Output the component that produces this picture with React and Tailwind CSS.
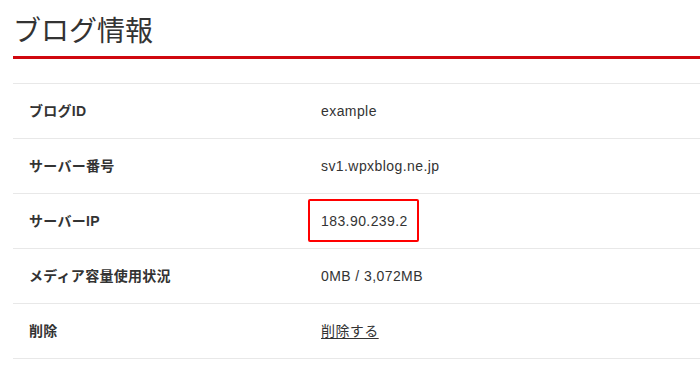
const FONT = {
  fontFamily:
    '"Liberation Sans", "Noto Sans CJK JP", "Noto Sans", sans-serif',
};

const ROWS = [
  { label: "ブログID", value: "example" },
  { label: "サーバー番号", value: "sv1.wpxblog.ne.jp" },
  { label: "サーバーIP", value: "183.90.239.2", highlight: true },
  { label: "メディア容量使用状況", value: "0MB / 3,072MB" },
  { label: "削除", value: "削除する", link: true },
];

function InfoRow({ label, value, highlight, link }) {
  return (
    <div className="grid grid-cols-[292px_1fr] h-[55px] border-b border-[#e8e8e8] items-center">
      <div className="pl-4 text-[14px] font-bold text-[#333] tracking-[0.02em]">
        {label}
      </div>
      <div className="pl-4 text-[14px] text-[#333] tracking-[0.03em]">
        <span className="relative inline-block">
          {link ? (
            <a href="#" className="underline underline-offset-2 text-[#333]">
              {value}
            </a>
          ) : (
            value
          )}
          {highlight && (
            <span className="absolute -left-[13px] w-[111px] -top-[12px] h-[43px] border-2 border-[#f00] rounded-[2px] pointer-events-none" />
          )}
        </span>
      </div>
    </div>
  );
}

export default function App() {
  return (
    <div className="w-[700px] h-[392px] bg-white pl-[13px] overflow-hidden" style={FONT}>
      <h1 className="pt-[18px] pb-[10px] text-[28px] leading-[28px] font-normal text-[#333] border-b-[3px] border-[#d0070f]">
        ブログ情報
      </h1>
      <div className="mt-6 border-t border-[#e8e8e8]">
        {ROWS.map((r) => (
          <InfoRow key={r.label} {...r} />
        ))}
      </div>
    </div>
  );
}
